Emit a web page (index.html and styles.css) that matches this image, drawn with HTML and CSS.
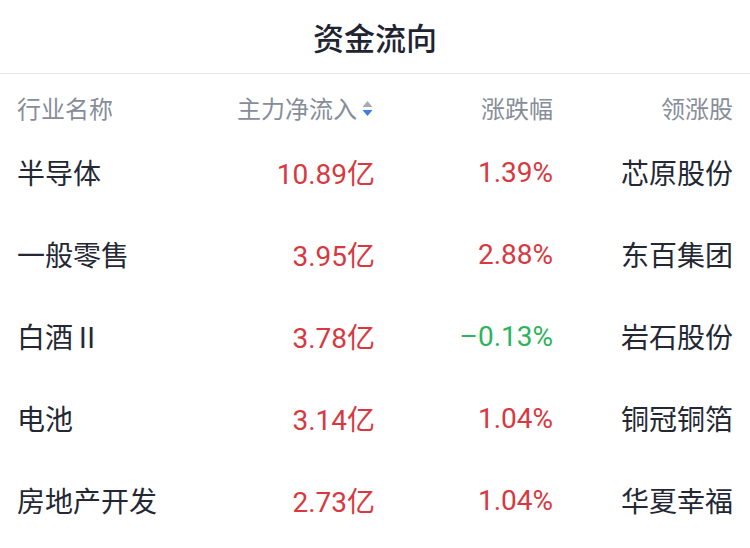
FILE: index.html
```html
<!DOCTYPE html>
<html lang="zh-CN">
<head>
<meta charset="utf-8">
<link rel="stylesheet" href="styles.css">
</head>
<body>
<div class="page">
  <div class="title">资金流向</div>
  <div class="table">
    <div class="row head">
      <div class="c1">行业名称</div>
      <div class="c2">主力净流入<span class="sort"><svg width="11" height="17" viewBox="0 0 11 17"><path d="M5.5 1 L10.5 7 L0.5 7 Z" fill="#a6abb5"/><path d="M0.5 10 L10.5 10 L5.5 16 Z" fill="#3b7de0"/></svg></span></div>
      <div class="c3">涨跌幅</div>
      <div class="c4">领涨股</div>
    </div>
    <div class="row">
      <div class="c1">半导体</div>
      <div class="c2 up">10.89亿</div>
      <div class="c3 up">1.39%</div>
      <div class="c4">芯原股份</div>
    </div>
    <div class="row">
      <div class="c1">一般零售</div>
      <div class="c2 up">3.95亿</div>
      <div class="c3 up">2.88%</div>
      <div class="c4">东百集团</div>
    </div>
    <div class="row">
      <div class="c1">白酒Ⅱ</div>
      <div class="c2 up">3.78亿</div>
      <div class="c3 down">–0.13%</div>
      <div class="c4">岩石股份</div>
    </div>
    <div class="row">
      <div class="c1">电池</div>
      <div class="c2 up">3.14亿</div>
      <div class="c3 up">1.04%</div>
      <div class="c4">铜冠铜箔</div>
    </div>
    <div class="row">
      <div class="c1">房地产开发</div>
      <div class="c2 up">2.73亿</div>
      <div class="c3 up">1.04%</div>
      <div class="c4">华夏幸福</div>
    </div>
  </div>
</div>
</body>
</html>
```
FILE: styles.css
```css
html, body {
  margin: 0;
  padding: 0;
  background: #ffffff;
}
.page {
  width: 750px;
  height: 548px;
  overflow: hidden;
  font-family: Roboto, "Noto Sans CJK SC", sans-serif;
  color: #232834;
}
.title {
  height: 73px;
  line-height: 74px;
  text-align: center;
  font-size: 31px;
  font-weight: 500;
  color: #1f2431;
  border-bottom: 1px solid #e9eaec;
  font-family: "Noto Sans CJK SC", sans-serif;
}
.table {
  padding: 0 17px;
}
.row {
  display: grid;
  grid-template-columns: 208px 150px 178px 180px;
  align-items: center;
  height: 82px;
  font-size: 28px;
}
.row.head {
  height: 57px;
  align-items: start;
  padding-top: 20px;
  box-sizing: border-box;
  font-size: 24px;
  line-height: 28px;
  color: #878d98;
  font-family: "Noto Sans CJK SC", sans-serif;
}
.c1 {
  text-align: left;
  font-family: "Noto Sans CJK SC", sans-serif;
}
.c2, .c3, .c4 {
  text-align: right;
}
.c4 {
  font-family: "Noto Sans CJK SC", sans-serif;
}
.head .c2 {
  display: flex;
  justify-content: flex-end;
  align-items: center;
}
.sort {
  display: inline-flex;
  margin-left: 5px;
  margin-right: 2px;
}
.up {
  color: #d8383f;
}
.down {
  color: #2fb35c;
}
```
